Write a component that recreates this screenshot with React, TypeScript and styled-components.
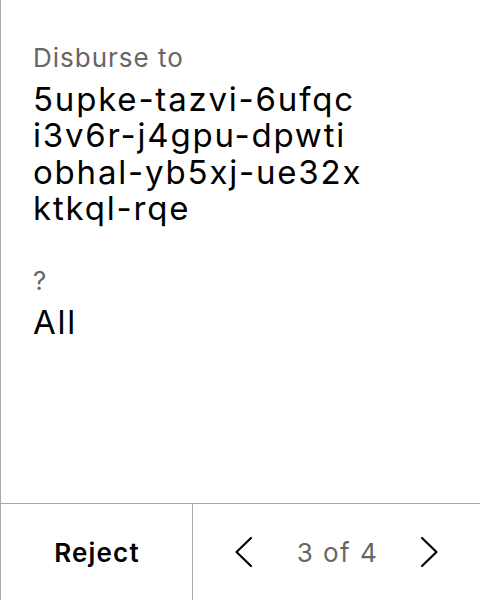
import React from "react";
import styled, { createGlobalStyle } from "styled-components";

const Global = createGlobalStyle`
  html, body { margin: 0; padding: 0; background: #fff; }
  body {
    font-family: Inter, "Noto Sans", sans-serif;
    -webkit-font-smoothing: antialiased;
  }
`;

const Screen = styled.div`
  width: 480px;
  height: 600px;
  box-sizing: border-box;
  border-left: 1px solid #a8a8a8;
  display: flex;
  flex-direction: column;
  background: #fff;
`;

const Content = styled.div`
  flex: 1;
  padding: 41.5px 32px 0 32px;
  display: flex;
  flex-direction: column;
`;

const Label = styled.div<{ $top?: number }>`
  font-size: 26px;
  line-height: 32px;
  letter-spacing: 1px;
  color: #666;
  margin-top: ${(p) => p.$top ?? 0}px;
  margin-bottom: 7px;
`;

const Value = styled.div`
  font-size: 33px;
  line-height: 36.5px;
  letter-spacing: 1.8px;
  color: #000;
`;

const Line = styled.div``;

const Footer = styled.div`
  height: 96px;
  border-top: 1px solid #a8a8a8;
  display: grid;
  grid-template-columns: 192px 1fr;
`;

const RejectButton = styled.button`
  border: none;
  border-right: 1px solid #a8a8a8;
  background: none;
  font-family: inherit;
  font-size: 26px;
  font-weight: 600;
  letter-spacing: 1.2px;
  color: #000;
  padding: 0 0 0 1px;
`;

const Pager = styled.div`
  display: flex;
  align-items: center;
  justify-content: space-between;
  padding: 0 41px 0 41px;
`;

const Arrow = styled.button`
  border: none;
  background: none;
  padding: 0;
  width: 19px;
  height: 40px;
  display: flex;
  align-items: center;
  justify-content: center;
`;

const Count = styled.span`
  font-size: 26px;
  letter-spacing: 1.5px;
  color: #666;
  padding-left: 2px;
`;

const Chevron = ({ dir }: { dir: "left" | "right" }) => (
  <svg width="19" height="32" viewBox="0 0 19 32" fill="none">
    <path
      d={dir === "left" ? "M17 2 L2.5 16 L17 30" : "M2 2 L16.5 16 L2 30"}
      stroke="#000"
      strokeWidth="2.2"
      strokeLinecap="round"
      strokeLinejoin="round"
    />
  </svg>
);

export default function App() {
  return (
    <Screen>
      <Global />
      <Content>
        <Label>Disburse to</Label>
        <Value>
          <Line>5upke-tazvi-6ufqc</Line>
          <Line>i3v6r-j4gpu-dpwti</Line>
          <Line>obhal-yb5xj-ue32x</Line>
          <Line>ktkql-rqe</Line>
        </Value>
        <Label $top={38.8}>?</Label>
        <Value>All</Value>
      </Content>
      <Footer>
        <RejectButton>Reject</RejectButton>
        <Pager>
          <Arrow><Chevron dir="left" /></Arrow>
          <Count>3 of 4</Count>
          <Arrow><Chevron dir="right" /></Arrow>
        </Pager>
      </Footer>
    </Screen>
  );
}
